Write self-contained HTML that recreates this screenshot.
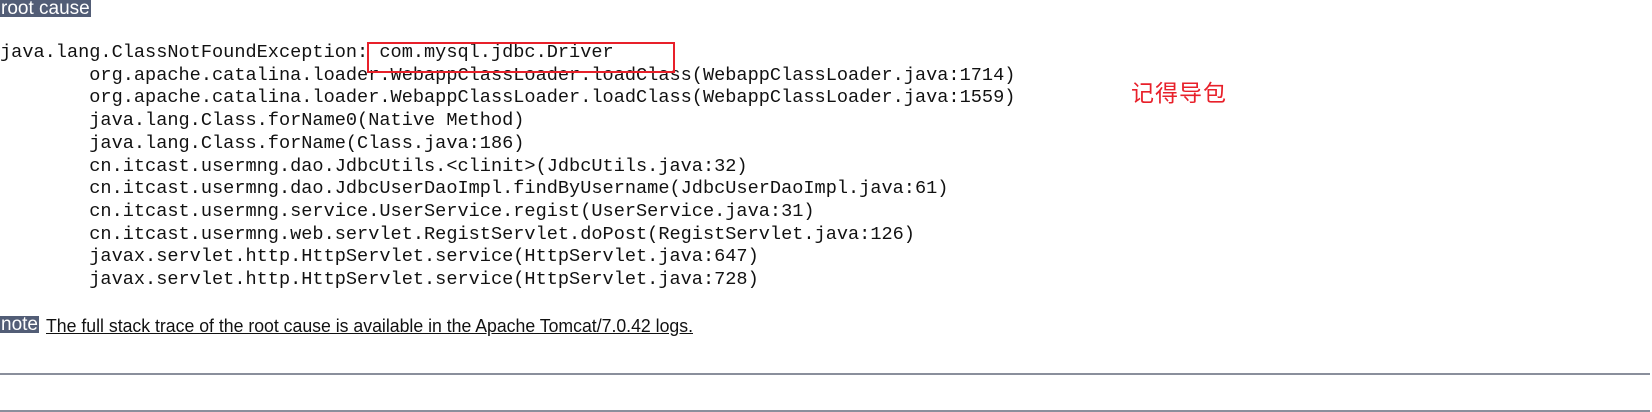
<!DOCTYPE html>
<html><head><meta charset="utf-8"><style>
body{margin:0;width:1652px;height:412px;background:#fff;position:relative;overflow:hidden;font-family:"Liberation Sans",sans-serif}
.lbl{position:absolute;background:#525D76;color:#fff;font-size:19px;line-height:17px;padding:0 1px}
pre{position:absolute;left:0;top:42px;margin:0;font-family:"Liberation Mono",monospace;font-size:18.6px;line-height:22.7px;color:#111}
.box{position:absolute;left:367px;top:42px;width:304px;height:27px;border:2px solid #e8202a}
.cn{position:absolute;left:1131px;top:74px;font-family:"Noto Sans CJK SC",sans-serif;font-size:23px;color:#e8202a;letter-spacing:1px}
.note{position:absolute;left:46px;top:316px;font-size:18px;line-height:20px;color:#111;text-decoration:underline;white-space:nowrap;transform-origin:left top}
.hr{position:absolute;left:0;width:1650px;height:2px;background:#8a8f9c}
</style></head><body>
<div class="lbl" style="left:0;top:0;">root cause</div>
<pre>java.lang.ClassNotFoundException: com.mysql.jdbc.Driver
        org.apache.catalina.loader.WebappClassLoader.loadClass(WebappClassLoader.java:1714)
        org.apache.catalina.loader.WebappClassLoader.loadClass(WebappClassLoader.java:1559)
        java.lang.Class.forName0(Native Method)
        java.lang.Class.forName(Class.java:186)
        cn.itcast.usermng.dao.JdbcUtils.&lt;clinit&gt;(JdbcUtils.java:32)
        cn.itcast.usermng.dao.JdbcUserDaoImpl.findByUsername(JdbcUserDaoImpl.java:61)
        cn.itcast.usermng.service.UserService.regist(UserService.java:31)
        cn.itcast.usermng.web.servlet.RegistServlet.doPost(RegistServlet.java:126)
        javax.servlet.http.HttpServlet.service(HttpServlet.java:647)
        javax.servlet.http.HttpServlet.service(HttpServlet.java:728)</pre>
<div class="box"></div>
<div class="cn">记得导包</div>
<div class="lbl" style="left:0;top:316px;">note</div>
<div class="note" id="n">The full stack trace of the root cause is available in the Apache Tomcat/7.0.42 logs.</div>
<div class="hr" style="top:373px"></div>
<div class="hr" style="top:410px"></div>
<script>
var n=document.getElementById('n');var w=n.getBoundingClientRect().width;n.style.transform='scaleX('+(647/w)+')';
</script>
</body></html>
